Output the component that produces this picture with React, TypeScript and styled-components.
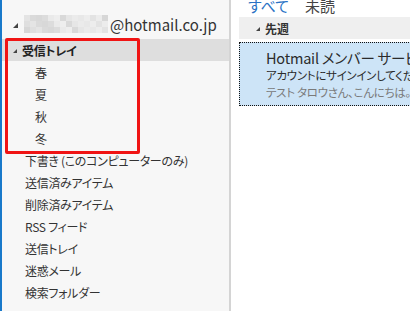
import React from 'react';
import styled, { createGlobalStyle } from 'styled-components';

const GlobalStyle = createGlobalStyle`
  html, body {
    margin: 0;
    padding: 0;
    overflow: hidden;
    background: #ffffff;
  }
  body {
    font-family: 'Noto Sans CJK JP', 'Noto Sans', sans-serif;
    font-feature-settings: 'palt';
  }
`;

const Window = styled.div`
  display: flex;
  width: 410px;
  height: 311px;
  overflow: hidden;
`;

const Sidebar = styled.nav`
  width: 227px;
  flex: none;
  background: #f7f7f7;
  border-left: 2px solid #1979ca;
  border-right: 2px solid #d4d4d4;
  padding-top: 12px;
  box-sizing: content-box;
`;

const AccountRow = styled.div`
  display: flex;
  align-items: center;
  height: 24px;
  padding-left: 11px;
  margin-bottom: 3px;
  color: #333;
  font-size: 15px;
`;

const Caret = styled.span<{ $small?: boolean }>`
  width: 0;
  height: 0;
  border-left: ${(p) => (p.$small ? 4 : 5)}px solid transparent;
  border-bottom: ${(p) => (p.$small ? 4 : 5)}px solid #444;
  margin-right: ${(p) => (p.$small ? 5 : 6)}px;
  margin-top: 2px;
`;

const Mosaic = styled.div`
  display: grid;
  grid-template-columns: repeat(14, 6px);
  grid-auto-rows: 6px;
  margin-right: 2px;
`;

const Cell = styled.span<{ $shade: string }>`
  background: ${(p) => p.$shade};
`;

const Group = styled.div`
  position: relative;
`;

const HighlightBox = styled.div`
  position: absolute;
  left: 3px;
  top: -1px;
  width: 129px;
  height: 110px;
  border: 3px solid #f01414;
  border-radius: 2px;
  pointer-events: none;
`;

const FolderRow = styled.div<{ $indent: number; $selected?: boolean }>`
  display: flex;
  align-items: center;
  height: 22px;
  padding-left: ${(p) => p.$indent}px;
  background: ${(p) => (p.$selected ? '#dedede' : 'transparent')};
  color: ${(p) => (p.$selected ? '#222' : '#333')};
  font-size: 12px;
  letter-spacing: -0.3px;
  font-weight: ${(p) => (p.$selected ? 700 : 400)};
  white-space: nowrap;
`;

const Main = styled.main`
  flex: 1;
  display: flex;
  flex-direction: column;
  padding-left: 8px;
  overflow: hidden;
`;

const Tabs = styled.div`
  display: flex;
  gap: 16px;
  height: 17px;
  padding-left: 9px;
  align-items: flex-end;
`;

const Tab = styled.span<{ $active?: boolean }>`
  font-size: 15px;
  line-height: 15px;
  margin-bottom: 4px;
  color: ${(p) => (p.$active ? '#2a72c4' : '#444')};
`;

const GroupHeader = styled.div`
  display: flex;
  align-items: center;
  height: 22px;
  padding-left: 17px;
  background: #efefef;
  font-size: 12px;
  font-weight: 700;
  color: #333;
`;

const MessageItem = styled.div`
  margin-top: 3px;
  width: 200px;
  height: 64px;
  background: #cde4f7;
  border: 1px dotted #111;
  padding: 6px 0 0 26px;
  box-sizing: border-box;
  white-space: nowrap;
  overflow: hidden;
`;

const Subject = styled.div`
  font-size: 14.5px;
  line-height: 18px;
  letter-spacing: -0.2px;
  color: #2b2b2b;
`;

const Line = styled.div<{ $muted?: boolean }>`
  font-size: 11.5px;
  line-height: 17px;
  letter-spacing: -0.3px;
  color: ${(p) => (p.$muted ? '#7a7a7a' : '#2b2b2b')};
`;

const shades = [
  '#e4e4e4', '#d9d9d9', '#ececec', '#dcdcdc', '#e8e8e8', '#d4d4d4', '#e2e2e2',
  '#ededed', '#dadada', '#e6e6e6', '#d7d7d7', '#eaeaea', '#dedede', '#e0e0e0',
  '#eeeeee', '#e3e3e3', '#d8d8d8', '#ebebeb', '#dfdfdf', '#e9e9e9', '#d6d6d6',
];

const subFolders = ['春', '夏', '秋', '冬'];
const folders = [
  '下書き (このコンピューターのみ)',
  '送信済みアイテム',
  '削除済みアイテム',
  'RSS フィード',
  '送信トレイ',
  '迷惑メール',
  '検索フォルダー',
];

const App = () => {
  return (
    <>
      <GlobalStyle />
      <Window>
        <Sidebar>
          <AccountRow>
            <Caret />
            <Mosaic>
              {Array.from({ length: 42 }).map((_, i) => (
                <Cell key={i} $shade={shades[(i * 7 + (i % 5)) % shades.length]} />
              ))}
            </Mosaic>
            @hotmail.co.jp
          </AccountRow>
          <Group>
            <FolderRow $indent={11} $selected>
              <Caret $small />
              受信トレイ
            </FolderRow>
            {subFolders.map((name) => (
              <FolderRow key={name} $indent={33}>
                {name}
              </FolderRow>
            ))}
            <HighlightBox />
          </Group>
          {folders.map((name) => (
            <FolderRow key={name} $indent={23}>
              {name}
            </FolderRow>
          ))}
        </Sidebar>
        <Main>
          <Tabs>
            <Tab $active>すべて</Tab>
            <Tab>未読</Tab>
          </Tabs>
          <GroupHeader>
            <Caret $small />
            先週
          </GroupHeader>
          <MessageItem>
            <Subject>Hotmail メンバー サービス</Subject>
            <Line>アカウントにサインインしてください</Line>
            <Line $muted>テスト タロウさん、こんにちは。</Line>
          </MessageItem>
        </Main>
      </Window>
    </>
  );
};

export default App;
